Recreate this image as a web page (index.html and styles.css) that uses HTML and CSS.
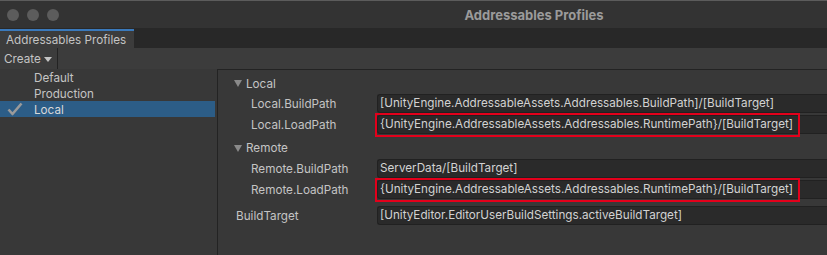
FILE: index.html
```html
<!DOCTYPE html>
<html lang="en">
<head>
    <meta charset="UTF-8">
    <meta name="viewport" content="width=device-width, initial-scale=1.0">
    <title>Addressables Profiles</title>
    <link rel="stylesheet" href="styles.css">
</head>
<body>
    <div class="window">
        <header class="titlebar">
            <div class="lights">
                <span class="light"></span>
                <span class="light"></span>
                <span class="light"></span>
            </div>
            <div class="window-title">Addressables Profiles</div>
        </header>

        <div class="tabbar">
            <div class="tab">Addressables Profiles</div>
        </div>

        <div class="toolbar">
            <div class="create-button">Create <span class="caret"></span></div>
        </div>

        <div class="main">
            <ul class="profile-list">
                <li class="profile-item">Default</li>
                <li class="profile-item">Production</li>
                <li class="profile-item selected">
                    <svg class="check" width="16" height="14" viewBox="0 0 16 14">
                        <path d="M1.5 7.5 L5.5 12 L14.5 1.5" fill="none" stroke="#9a9a9a" stroke-width="2.6" stroke-linejoin="round"/>
                    </svg>
                    Local
                </li>
            </ul>

            <div class="variables">
                <div class="group-header"><span class="foldout"></span>Local</div>
                <div class="var-row indented">
                    <span class="var-label">Local.BuildPath</span>
                    <span class="var-field">[UnityEngine.AddressableAssets.Addressables.BuildPath]/[BuildTarget]</span>
                </div>
                <div class="var-row indented">
                    <span class="var-label">Local.LoadPath</span>
                    <span class="var-field">{UnityEngine.AddressableAssets.Addressables.RuntimePath}/[BuildTarget]<span class="highlight"></span></span>
                </div>

                <div class="group-header second"><span class="foldout"></span>Remote</div>
                <div class="var-row indented">
                    <span class="var-label">Remote.BuildPath</span>
                    <span class="var-field">ServerData/[BuildTarget]</span>
                </div>
                <div class="var-row indented">
                    <span class="var-label">Remote.LoadPath</span>
                    <span class="var-field">{UnityEngine.AddressableAssets.Addressables.RuntimePath}/[BuildTarget]<span class="highlight"></span></span>
                </div>

                <div class="var-row top-level">
                    <span class="var-label">BuildTarget</span>
                    <span class="var-field">[UnityEditor.EditorUserBuildSettings.activeBuildTarget]</span>
                </div>
            </div>
        </div>
    </div>
</body>
</html>
```

FILE: styles.css
```css
body {
    margin: 0;
    padding: 0;
    background-color: #383838;
    font-family: Inter, "Noto Sans", sans-serif;
    font-size: 11.7px;
    color: #c4c4c4;
    overflow: hidden;
}

.window {
    width: 827px;
    height: 255px;
    display: flex;
    flex-direction: column;
    overflow: hidden;
}

/* Title bar */
.titlebar {
    height: 27px;
    border-top: 1px solid #5c5c5c;
    background-color: #333333;
    display: flex;
    align-items: center;
}

.lights {
    display: flex;
    gap: 8px;
    padding-left: 7px;
}

.light {
    width: 12px;
    height: 12px;
    border-radius: 50%;
    background-color: #5c5c5c;
}

.window-title {
    flex: 1;
    text-align: center;
    padding-left: 182px;
    font-weight: bold;
    font-size: 13px;
    color: #9b9b9b;
}

/* Tabs */
.tabbar {
    height: 20px;
    background-color: #282828;
    display: flex;
}

.tab {
    width: 134px;
    padding-left: 6px;
    border-top: 2px solid #3a79bb;
    background-color: #3c3c3c;
    line-height: 18px;
    margin-top: 1px;
    height: 19px;
    box-sizing: border-box;
}

/* Toolbar */
.toolbar {
    height: 21px;
    background-color: #3c3c3c;
    display: flex;
}

.create-button {
    display: flex;
    align-items: center;
    gap: 3px;
    padding: 1px 4px 0;
    border-right: 1px solid #232323;
    width: 49px;
}

.caret {
    width: 0;
    height: 0;
    border-left: 4px solid transparent;
    border-right: 4px solid transparent;
    border-top: 5px solid #c4c4c4;
}

/* Main split */
.main {
    flex: 1;
    display: flex;
}

.profile-list {
    list-style: none;
    margin: 0;
    padding: 0;
    width: 217px;
    flex-shrink: 0;
}

.profile-item {
    height: 16px;
    line-height: 18px;
    padding-left: 34px;
    margin-right: 2px;
    position: relative;
}

.profile-item.selected {
    background-color: #2c5d87;
    color: #d8d8d8;
}

.check {
    position: absolute;
    left: 7px;
    top: 1px;
}

.variables {
    flex: 1;
    border-top: 1px solid #232323;
    border-left: 1px solid #232323;
    padding-top: 4px;
}

.group-header {
    height: 19px;
    display: flex;
    align-items: center;
    padding-left: 16px;
}

.group-header.second {
    margin-top: 3px;
    height: 20px;
}

.foldout {
    width: 0;
    height: 0;
    border-left: 4px solid transparent;
    border-right: 4px solid transparent;
    border-top: 7px solid #8a8a8a;
    margin-right: 4px;
}

.var-row {
    height: 21px;
    display: flex;
    align-items: center;
}

.var-row.indented {
    padding-left: 33px;
}

.var-row.indented .var-label {
    width: 126px;
}

.var-row.top-level {
    padding-left: 18px;
    margin-top: 5px;
}

.var-row.top-level .var-label {
    width: 141px;
}

.var-label {
    flex-shrink: 0;
}

.var-field {
    flex: 1;
    height: 19px;
    line-height: 17px;
    box-sizing: border-box;
    border: 1px solid #212121;
    border-right: none;
    border-radius: 3px 0 0 3px;
    background-color: #2a2a2a;
    color: #d2d2d2;
    font-size: 11.7px;
    padding-left: 2px;
    white-space: nowrap;
    position: relative;
}

/* Red annotation boxes drawn over the fields */
.highlight {
    position: absolute;
    left: -3px;
    top: -3px;
    width: 425px;
    height: 24px;
    box-sizing: border-box;
    border: 2px solid #e3001b;
}
```
